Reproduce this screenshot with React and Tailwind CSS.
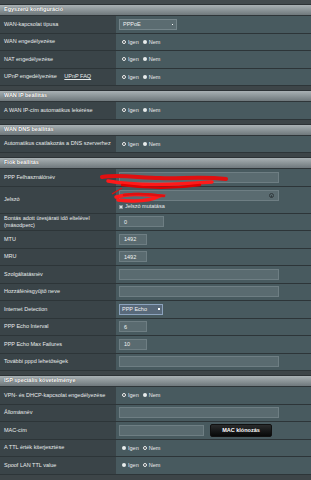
import React from "react";

const F = { fontFamily: '"Liberation Sans", Arial, sans-serif' };

function Header({ children }) {
  return (
    <div className="h-[11px] flex items-center pl-[4px] bg-gradient-to-b from-[#a9b1b4] via-[#8c9598] to-[#6f787c] border-b border-[#2e3538]">
      <span className="text-[5.5px] font-bold text-white leading-none [text-shadow:0_0_1px_#333]">{children}</span>
    </div>
  );
}

function Gap() {
  return <div className="h-[5px] bg-[#3d4548] border-b border-[#2c3235]" />;
}

function Row({ label, children, h = "h-[17.5px]", label2 }) {
  return (
    <div className={`${h} flex border-b-[1.5px] border-[#2d3538]`}>
      <div className="w-[116px] shrink-0 bg-[#3a4448] flex flex-col justify-center pl-[4px] text-[5.5px] leading-[7px] text-[#e8ecec]">
        <span>{label}</span>
        {label2 && <span>{label2}</span>}
      </div>
      <div className="flex-1 bg-[#485a5f] flex items-center pl-[3px]">{children}</div>
    </div>
  );
}

function Radio({ yesChecked = false }) {
  const on = <span className="w-[4px] h-[4px] rounded-full bg-[#e8eced] inline-block" />;
  const off = <span className="w-[4px] h-[4px] rounded-full border border-[#f2f2f2] bg-[#3a4548] inline-block" />;
  return (
    <div className="flex items-center text-[5.5px] text-[#e8eced] pl-[3px]">
      {yesChecked ? on : off}
      <span className="ml-[2px]">Igen</span>
      <span className="ml-[4px]">{yesChecked ? off : on}</span>
      <span className="ml-[2px]">Nem</span>
    </div>
  );
}

function Input({ w, value = "", children }) {
  return (
    <div className={`${w} h-[11px] bg-[#5a6b70] border border-[#6e7e83] flex items-center pl-[4px] text-[5.5px] text-[#f0f2f2] relative`}>
      {value}
      {children}
    </div>
  );
}

export default function App() {
  return (
    <div style={F} className="w-[311px] h-[480px] overflow-hidden bg-[#3d4548] relative">
      <div className="h-[5px] bg-[#434b4e] border-b border-[#2c3235]" />
      <Header>Egyszerű konfiguráció</Header>
      <Row label="WAN-kapcsolat típusa">
        <div className="w-[58px] h-[11px] bg-[#5b6c71] border border-[#75858a] flex items-center justify-between px-[3px] text-[5.5px] text-[#f0f2f2]">
          <span>PPPoE</span>
          <span className="w-[1.5px] h-[1.5px] bg-white" />
        </div>
      </Row>
      <Row label="WAN engedélyezése"><Radio /></Row>
      <Row label="NAT engedélyezése"><Radio /></Row>
      <Row label={<span>UPnP engedélyezése <span className="ml-[6px] underline">UPnP  FAQ</span></span>}><Radio /></Row>
      <Gap />
      <Header>WAN IP beállítás</Header>
      <Row label="A WAN IP-cím automatikus lekérése"><Radio /></Row>
      <Gap />
      <Header>WAN DNS beállítás</Header>
      <Row label="Automatikus csatlakozás a DNS szerverhez"><Radio /></Row>
      <Gap />
      <Header>Fiók beállítás</Header>
      <Row label="PPP Felhasználónév"><Input w="w-[160px]" /></Row>
      <Row label="Jelszó" h="h-[27px]">
        <div className="flex flex-col gap-[1px] pt-[2px]">
          <Input w="w-[160px]">
            <span className="absolute right-[4px] top-[2px] w-[5px] h-[5px] rounded-full border border-[#2f383b] flex items-center justify-center">
              <span className="w-[1.5px] h-[1.5px] rounded-full bg-[#2f383b]" />
            </span>
          </Input>
          <div className="flex items-center text-[5.5px] text-[#e8eced]">
            <span className="w-[4px] h-[4px] bg-[#d8dcdd] border border-[#8a9498] inline-block" />
            <span className="ml-[2px]">Jelszó mutatása</span>
          </div>
        </div>
      </Row>
      <Row label="Bontás adott üresjárati idő eltelével" label2="(másodperc)"><Input w="w-[45px]" value="0" /></Row>
      <Row label="MTU"><Input w="w-[28px]" value="1492" /></Row>
      <Row label="MRU"><Input w="w-[28px]" value="1492" /></Row>
      <Row label="Szolgáltatásnév"><Input w="w-[160px]" /></Row>
      <Row label="Hozzáférésgyűjtő neve"><Input w="w-[160px]" /></Row>
      <Row label="Internet Detection">
        <div className="w-[44px] h-[11px] bg-[#58697a] border border-[#8ca3bd] flex items-center justify-between px-[2px] text-[5.5px] text-[#f0f2f2]">
          <span>PPP  Echo</span>
          <span className="w-[2px] h-[2px] bg-white" />
        </div>
      </Row>
      <Row label="PPP Echo Interval"><Input w="w-[28px]" value="6" /></Row>
      <Row label="PPP Echo Max Failures"><Input w="w-[28px]" value="10" /></Row>
      <Row label="További pppd lehetőségek"><Input w="w-[160px]" /></Row>
      <Gap />
      <Header>ISP speciális követelménye</Header>
      <Row label="VPN- és DHCP-kapcsolat engedélyezése"><Radio /></Row>
      <Row label="Állomásnév"><Input w="w-[160px]" /></Row>
      <Row label="MAC-cím">
        <div className="flex items-center">
          <Input w="w-[85px]" />
          <div className="ml-[6px] w-[62px] h-[13px] rounded-[2px] bg-gradient-to-b from-[#2a2c2d] to-[#080909] border border-[#111] flex items-center justify-center text-[5.5px] font-bold text-white">
            MAC klónozás
          </div>
        </div>
      </Row>
      <Row label="A TTL érték kiterjesztése"><Radio yesChecked /></Row>
      <Row label="Spoof LAN TTL value"><Radio yesChecked /></Row>

      <svg className="absolute left-[100px] top-[172px]" width="130" height="40" viewBox="0 0 130 40">
        <path d="M2 5 C20 2 40 6 60 6 C80 7 100 4 126 7" stroke="#e01010" strokeWidth="4" fill="none" strokeLinecap="round" />
        <path d="M8 9 C30 13 60 14 112 10" stroke="#ff1a1a" strokeWidth="3.5" fill="none" strokeLinecap="round" />
        <path d="M22 13 C50 17 72 17 100 13" stroke="#d00" strokeWidth="2.5" fill="none" strokeLinecap="round" />
        <path d="M22 16 L12 22" stroke="#e01010" strokeWidth="1.2" fill="none" />
        <path d="M16 25 C30 21 45 23 60 24 C50 29 35 30 18 28" stroke="#ff1a1a" strokeWidth="3.5" fill="none" strokeLinecap="round" />
        <path d="M24 23 C38 21 50 22 64 24" stroke="#e01010" strokeWidth="2.5" fill="none" strokeLinecap="round" />
      </svg>
    </div>
  );
}
